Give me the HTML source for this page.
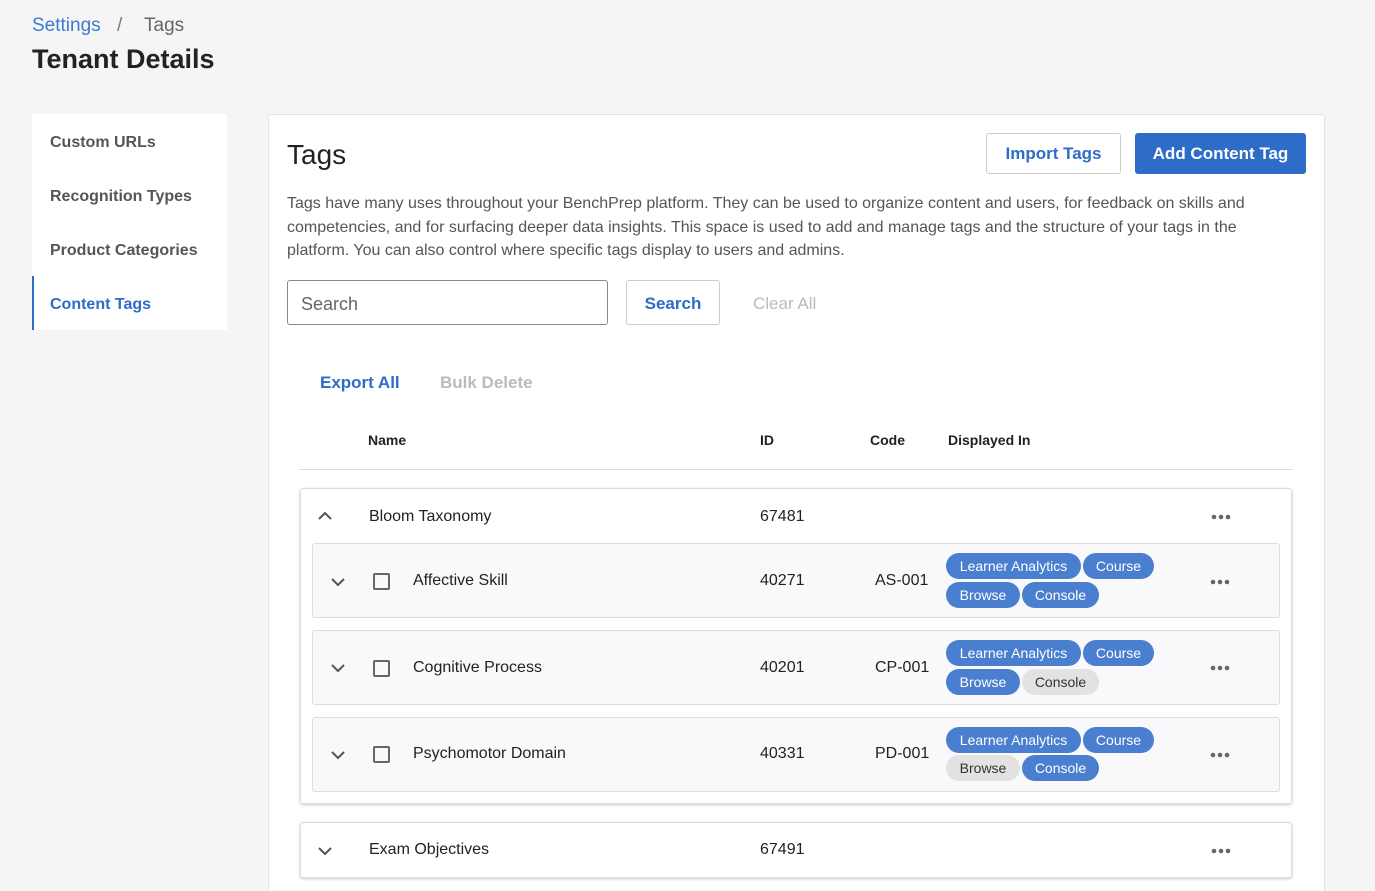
<!DOCTYPE html>
<html><head><style>
*{box-sizing:border-box;margin:0;padding:0}
html,body{width:1375px;height:891px;overflow:hidden}
body{background:#f5f5f5;font-family:"Liberation Sans",sans-serif;color:#222;position:relative}
.a{position:absolute;white-space:nowrap}
.nav{position:absolute;left:32px;top:114px;width:195px;height:216px;background:#fff}
.nav div{position:absolute;left:18px;font-size:16px;color:#555;font-weight:bold}
.card{position:absolute;left:268px;top:114px;width:1057px;height:800px;background:#fff;border:1px solid #e3e3e3;border-radius:3px}
.grp{position:absolute;left:300px;width:992px;background:#fff;border:1px solid #ddd;border-radius:3px;box-shadow:0 1px 3px rgba(0,0,0,.2)}
.row{position:absolute;left:312px;width:968px;height:75px;background:#f9f9fb;border:1px solid #ddd;border-radius:3px}
.pill{position:absolute;height:26px;border-radius:13px;background:#4a7fcf;color:#fff;font-size:14px;line-height:27px;text-align:center}
.pill.g{background:#e2e2e2;color:#333}
.dots{position:absolute}
.cb{position:absolute;width:17px;height:17px;border:2px solid #666;border-radius:2px}
.t16{font-size:16px}
</style></head><body>
<div class="a" style="left:32px;top:15px;font-size:19px;color:#3d7bd1">Settings</div>
<div class="a" style="left:117px;top:15px;font-size:19px;color:#777">/</div>
<div class="a" style="left:144px;top:15px;font-size:19px;color:#666">Tags</div>
<div class="a" style="left:32px;top:44px;font-size:27px;font-weight:bold;color:#222">Tenant Details</div>
<div class="nav">
<div style="top:20px">Custom URLs</div>
<div style="top:74px">Recognition Types</div>
<div style="top:128px">Product Categories</div>
<div style="top:182px;color:#2d6cc7">Content Tags</div>
<span style="position:absolute;left:0;top:162px;width:2px;height:54px;background:#2d6cc7"></span>
</div>
<div class="card"></div>
<div class="a" style="left:287px;top:139px;font-size:28px;color:#222">Tags</div>
<div class="a" style="left:986px;top:133px;width:135px;height:41px;border:1px solid #ccc;border-radius:3px;background:#fff;color:#2d6cc7;font-size:17px;font-weight:bold;line-height:39px;text-align:center">Import Tags</div>
<div class="a" style="left:1135px;top:133px;width:171px;height:41px;border-radius:3px;background:#2d6cc7;color:#fff;font-size:17px;font-weight:bold;line-height:41px;text-align:center">Add Content Tag</div>
<div class="a" style="left:287px;top:192px;width:1000px;white-space:normal;font-size:16px;line-height:23.5px;color:#555">Tags have many uses throughout your BenchPrep platform. They can be used to organize content and users, for feedback on skills and competencies, and for surfacing deeper data insights. This space is used to add and manage tags and the structure of your tags in the platform. You can also control where specific tags display to users and admins.</div>
<div class="a" style="left:287px;top:280px;width:321px;height:45px;border:1px solid #888;border-radius:3px;font-size:18px;color:#666;padding:13px 13px">Search</div>
<div class="a" style="left:626px;top:280px;width:94px;height:45px;border:1px solid #ccc;border-radius:3px;color:#2d6cc7;font-size:17px;font-weight:bold;line-height:45px;text-align:center">Search</div>
<div class="a" style="left:753px;top:294px;font-size:17px;color:#bbb">Clear All</div>
<div class="a" style="left:320px;top:373px;font-size:17px;font-weight:bold;color:#2d6cc7">Export All</div>
<div class="a" style="left:440px;top:373px;font-size:17px;font-weight:bold;color:#bbb">Bulk Delete</div>
<div class="a" style="left:368px;top:432px;font-size:14px;font-weight:bold">Name</div>
<div class="a" style="left:760px;top:432px;font-size:14px;font-weight:bold">ID</div>
<div class="a" style="left:870px;top:432px;font-size:14px;font-weight:bold">Code</div>
<div class="a" style="left:948px;top:432px;font-size:14px;font-weight:bold">Displayed In</div>
<div class="a" style="left:299px;top:469px;width:994px;height:1px;background:#ddd"></div>

<div class="grp" style="top:488px;height:316px"></div>
<svg class="a" style="left:317px;top:510px" width="16" height="12"><path d="M2 9 L8 3 L14 9" fill="none" stroke="#555" stroke-width="2"/></svg>
<div class="a t16" style="left:369px;top:508px">Bloom Taxonomy</div>
<div class="a t16" style="left:760px;top:508px">67481</div>
<svg class="dots" style="left:1211px;top:513px" width="20" height="8"><circle cx="3" cy="4" r="2.3" fill="#666"/><circle cx="10" cy="4" r="2.3" fill="#666"/><circle cx="17" cy="4" r="2.3" fill="#666"/></svg>

<div class="row" style="top:543px"></div>
<div class="row" style="top:630px;height:75px"></div>
<div class="row" style="top:717px"></div>

<svg class="a" style="left:330px;top:576px" width="16" height="12"><path d="M2 3 L8 9 L14 3" fill="none" stroke="#555" stroke-width="2"/></svg>
<div class="cb" style="left:373px;top:573px"></div>
<div class="a t16" style="left:413px;top:572px">Affective Skill</div>
<div class="a t16" style="left:760px;top:572px">40271</div>
<div class="a t16" style="left:875px;top:572px">AS-001</div>
<div class="pill" style="left:946px;top:553px;width:135px">Learner Analytics</div>
<div class="pill" style="left:1083px;top:553px;width:71px">Course</div>
<div class="pill" style="left:946px;top:582px;width:74px">Browse</div>
<div class="pill" style="left:1022px;top:582px;width:77px">Console</div>
<svg class="dots" style="left:1210px;top:578px" width="20" height="8"><circle cx="3" cy="4" r="2.3" fill="#666"/><circle cx="10" cy="4" r="2.3" fill="#666"/><circle cx="17" cy="4" r="2.3" fill="#666"/></svg>

<svg class="a" style="left:330px;top:662px" width="16" height="12"><path d="M2 3 L8 9 L14 3" fill="none" stroke="#555" stroke-width="2"/></svg>
<div class="cb" style="left:373px;top:660px"></div>
<div class="a t16" style="left:413px;top:659px">Cognitive Process</div>
<div class="a t16" style="left:760px;top:659px">40201</div>
<div class="a t16" style="left:875px;top:659px">CP-001</div>
<div class="pill" style="left:946px;top:640px;width:135px">Learner Analytics</div>
<div class="pill" style="left:1083px;top:640px;width:71px">Course</div>
<div class="pill" style="left:946px;top:669px;width:74px">Browse</div>
<div class="pill g" style="left:1022px;top:669px;width:77px">Console</div>
<svg class="dots" style="left:1210px;top:664px" width="20" height="8"><circle cx="3" cy="4" r="2.3" fill="#666"/><circle cx="10" cy="4" r="2.3" fill="#666"/><circle cx="17" cy="4" r="2.3" fill="#666"/></svg>

<svg class="a" style="left:330px;top:749px" width="16" height="12"><path d="M2 3 L8 9 L14 3" fill="none" stroke="#555" stroke-width="2"/></svg>
<div class="cb" style="left:373px;top:746px"></div>
<div class="a t16" style="left:413px;top:745px">Psychomotor Domain</div>
<div class="a t16" style="left:760px;top:745px">40331</div>
<div class="a t16" style="left:875px;top:745px">PD-001</div>
<div class="pill" style="left:946px;top:727px;width:135px">Learner Analytics</div>
<div class="pill" style="left:1083px;top:727px;width:71px">Course</div>
<div class="pill g" style="left:946px;top:755px;width:74px">Browse</div>
<div class="pill" style="left:1022px;top:755px;width:77px">Console</div>
<svg class="dots" style="left:1210px;top:751px" width="20" height="8"><circle cx="3" cy="4" r="2.3" fill="#666"/><circle cx="10" cy="4" r="2.3" fill="#666"/><circle cx="17" cy="4" r="2.3" fill="#666"/></svg>

<div class="grp" style="top:822px;height:56px"></div>
<svg class="a" style="left:317px;top:845px" width="16" height="12"><path d="M2 3 L8 9 L14 3" fill="none" stroke="#555" stroke-width="2"/></svg>
<div class="a t16" style="left:369px;top:841px">Exam Objectives</div>
<div class="a t16" style="left:760px;top:841px">67491</div>
<svg class="dots" style="left:1211px;top:847px" width="20" height="8"><circle cx="3" cy="4" r="2.3" fill="#666"/><circle cx="10" cy="4" r="2.3" fill="#666"/><circle cx="17" cy="4" r="2.3" fill="#666"/></svg>
</body></html>
